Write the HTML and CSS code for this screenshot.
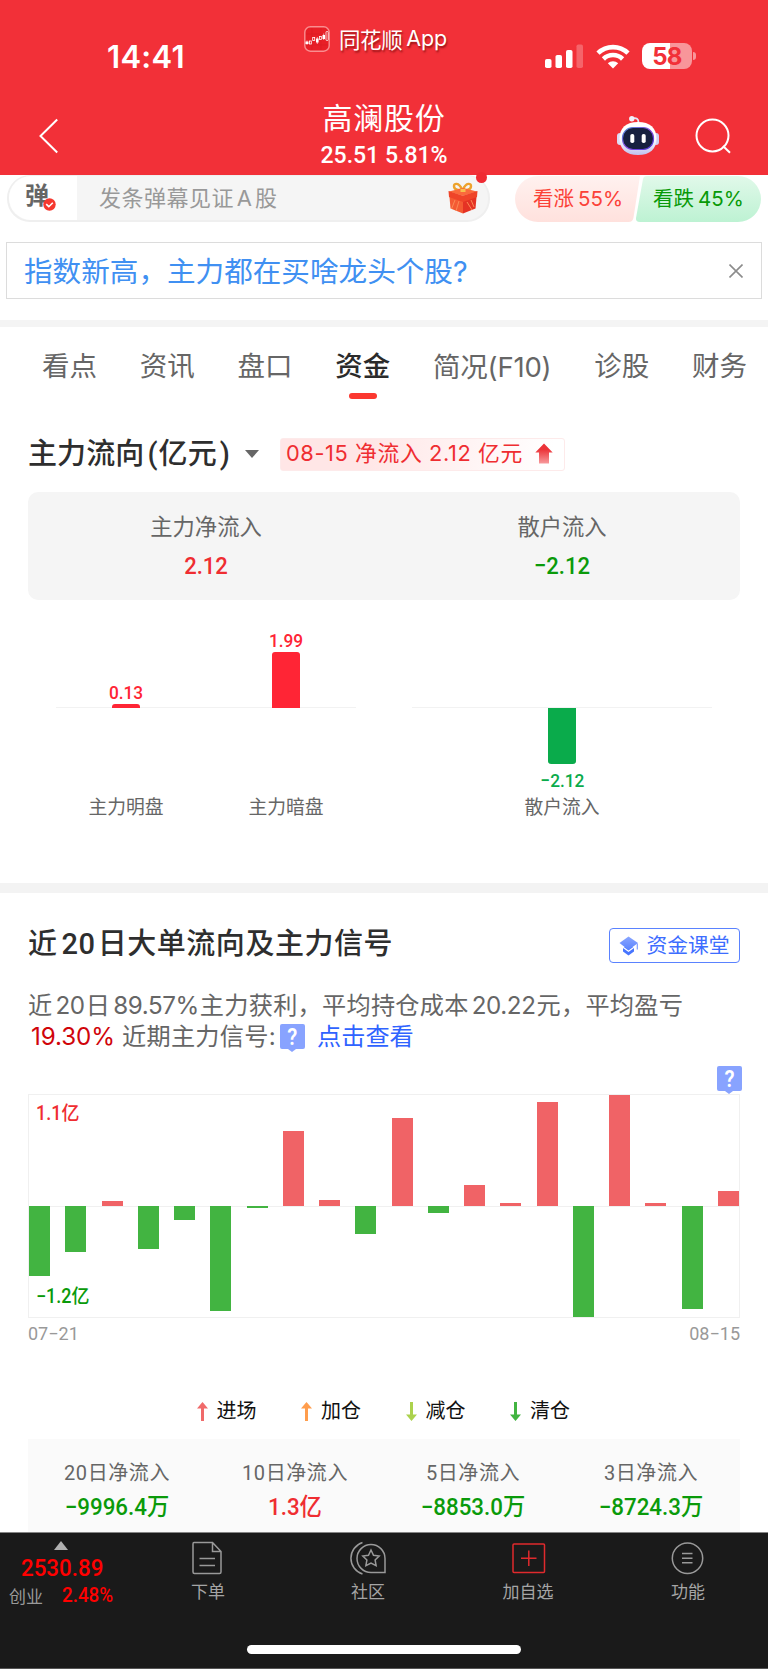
FILE: index.html
```html
<!DOCTYPE html>
<html lang="zh-CN">
  <head>
    <meta charset="utf-8" />
    <title>高澜股份</title>
    <link rel="stylesheet" href="styles.css">
  </head>
  <body>
    <header class="header">
      <div class="status">
        <div class="clock">14:41</div>
        <div class="appname">
          <svg width="26" height="26" viewBox="0 0 26 26">
            <rect x="0.8" y="0.8" width="24.4" height="24.4" rx="5.5" fill="#e81f27" stroke="#f98e90" stroke-width="1.4"/>
            <path d="M2 8h22M2 19h22M8 2v22M17 2v22" stroke="#d81c24" stroke-width="0.6"/>
            <g fill="#fff">
              <rect x="1.5" y="15.5" width="3" height="2.5"/>
              <rect x="12" y="12.5" width="2.6" height="4"/>
              <rect x="18.5" y="9" width="2.5" height="4"/>
              <path d="M3 14.5v4.5M13.3 11v7M19.7 7.5v6.5" stroke="#fff" stroke-width="0.6"/>
            </g>
            <g fill="none" stroke="#fff" stroke-width="0.8">
              <rect x="5.5" y="15" width="1.8" height="3"/>
              <rect x="8.7" y="11.5" width="2" height="3"/>
              <rect x="15.5" y="10.5" width="1.8" height="3"/>
              <rect x="22" y="5.5" width="2.2" height="9" rx="0.8"/>
            </g>
          </svg>
          <span class="appcn">同花顺</span><span class="appen">App</span>
        </div>
        <div class="signals">
          <svg width="38" height="24" viewBox="0 0 38 24" fill="#fff">
            <rect x="0" y="15" width="6.5" height="9" rx="1.8"/>
            <rect x="10.5" y="11" width="6.5" height="13" rx="1.8"/>
            <rect x="21" y="6" width="6.5" height="18" rx="1.8"/>
            <rect x="31.5" y="0.5" width="6.5" height="23.5" rx="1.8" opacity="0.25"/>
          </svg>
          <svg width="34" height="25" viewBox="0 0 34 25">
            <g fill="none" stroke="#fff" stroke-width="4.6">
              <path d="M2 9.2a21.5 21.5 0 0 1 30 0"/>
              <path d="M7.4 15a13.7 13.7 0 0 1 19.2 0"/>
            </g>
            <path d="M17 24.5l-5.2-5.2a7.5 7.5 0 0 1 10.4 0z" fill="#fff"/>
          </svg>
          <div class="battery"><span class="level">58</span><i class="nub"></i></div>
        </div>
      </div>
      <div class="titlebar">
        <svg class="back" width="20" height="36" viewBox="0 0 20 36"><path d="M18.2 1.5L1.5 18l16.7 16.5" fill="none" stroke="#fff" stroke-width="2"/></svg>
        <div class="stock">
          <div class="name">高澜股份</div>
          <div class="quote">25.51 5.81%</div>
        </div>
        <div class="tools">
          <svg width="42" height="40" viewBox="0 0 42 40">
            <defs>
              <linearGradient id="shell" x1="0" y1="0" x2="0" y2="1"><stop offset="0.5" stop-color="#fff"/><stop offset="1" stop-color="#bfc0ee"/></linearGradient>
              <linearGradient id="ring" x1="0" y1="0" x2="1" y2="1"><stop offset="0" stop-color="#4f8fd8"/><stop offset="0.5" stop-color="#8a4be0"/><stop offset="1" stop-color="#4a35d8"/></linearGradient>
            </defs>
            <path d="M15.5 2.5c4-1 6 0.5 6 4" fill="none" stroke="#e6e6f6" stroke-width="1.8"/>
            <circle cx="14.8" cy="2.8" r="2.7" fill="#f1f1fb"/>
            <rect x="0" y="17" width="6" height="12" rx="3" fill="#dcdcf6"/>
            <rect x="36" y="17" width="6" height="12" rx="3" fill="#cfcff2"/>
            <path d="M21 6c12 0 18.5 6 18.5 16.5S33 39 21 39 2.5 33 2.5 22.5 9 6 21 6z" fill="url(#shell)"/>
            <rect x="5.5" y="11.5" width="31" height="22" rx="10.5" fill="#17203f" stroke="url(#ring)" stroke-width="1.2"/>
            <rect x="13.3" y="18" width="4" height="9" rx="1.8" fill="#fff"/>
            <rect x="24.7" y="18" width="4" height="9" rx="1.8" fill="#fff"/>
          </svg>
          <svg width="36" height="36" viewBox="0 0 36 36" fill="none" stroke="#fff" stroke-width="2">
            <circle cx="17.5" cy="17.5" r="16"/>
            <path d="M28 28l7 6.8"/>
          </svg>
        </div>
      </div>
    </header>

    <div class="danmu">
      <div class="inputbar">
        <div class="toggle">
          <span class="dan">弹</span>
          <svg class="check" width="13" height="13" viewBox="0 0 13 13"><circle cx="6.5" cy="6.5" r="6.2" fill="#f5382f"/><path d="M3.2 6.2l2.6 2.5 4-4" fill="none" stroke="#fff" stroke-width="1.6"/></svg>
        </div>
        <div class="hint">发条弹幕见证 A 股</div>
        <svg class="gift" width="30" height="32" viewBox="0 0 30 32">
          <g fill="none" stroke="#eda32c" stroke-width="2.4">
            <path d="M14 7.5C11 0 5.5 1 6 4.5s5 4 8 3z"/>
            <path d="M15 7.5C18 0 23.5 1 23 4.5s-5 4-8 3z"/>
          </g>
          <path d="M1 9.5L15 6l14 3.5-14 4.5z" fill="#fa6a3c"/>
          <path d="M1 9.5l14 4.5v17.5L2.5 26.5z" fill="#f45a33"/>
          <path d="M29 9.5L15 14v17.5l12.5-5z" fill="#e53224"/>
          <path d="M0.5 9l14.5 5 14.5-5-0.5 6-14 5-14-5z" fill="#ef4429"/>
          <path d="M7 18l-3.5 9M11 19l-3 10M19 20l5 8M23 18l3 7" stroke="#fb8a55" stroke-width="1"/>
          <path d="M12.5 7h5v3h-5z" fill="#f6c04c"/>
        </svg>
        <i class="reddot"></i>
      </div>
      <svg class="vote" width="246" height="46" viewBox="0 0 246 46">
        <defs>
          <linearGradient id="up" x1="0" y1="0" x2="0" y2="1"><stop offset="0" stop-color="#fff1ef"/><stop offset="1" stop-color="#ffe1dd"/></linearGradient>
          <linearGradient id="down" x1="0" y1="0" x2="0" y2="1"><stop offset="0" stop-color="#e1f9ea"/><stop offset="1" stop-color="#bdf2d3"/></linearGradient>
        </defs>
        <path d="M23 0H125L118.5 41.5Q117.8 46 113.5 46H23A23 23 0 0 1 23 0z" fill="url(#up)"/>
        <path d="M132 0Q128.5 0 128 3L121 42Q120.5 46 125 46H223A23 23 0 0 0 223 0z" fill="url(#down)"/>
        <text x="18" y="29.5" fill="#fb4238">看涨<tspan x="63">55%</tspan></text>
        <text x="138" y="29.5" fill="#089a08">看跌<tspan x="183">45%</tspan></text>
      </svg>
    </div>

    <div class="banner">
      <span>指数新高，主力都在买啥龙头个股?</span>
      <svg width="14" height="14" viewBox="0 0 14 14"><path d="M0.5 0.5l13 13M13.5 0.5l-13 13" stroke="#8c8c8c" stroke-width="1.6"/></svg>
    </div>

    <nav class="tabs">
      <span>看点</span>
      <span>资讯</span>
      <span>盘口</span>
      <span class="active">资金</span>
      <span class="f10">简况(F10)</span>
      <span>诊股</span>
      <span>财务</span>
    </nav>

    <section class="flow">
      <div class="flowhead">
        <h2>主力流向<span class="paren">(</span>亿元<span class="paren">)</span></h2>
        <i class="caret"></i>
        <div class="badge">
          <span>08-15 净流入 2.12 亿元</span>
          <svg width="18" height="21" viewBox="0 0 18 21">
            <defs><linearGradient id="arr" x1="0" y1="0" x2="0" y2="1"><stop offset="0.3" stop-color="#ec3338"/><stop offset="1" stop-color="#f79a9c"/></linearGradient></defs>
            <path d="M9 0.5l8.7 9H14V20.5H4V9.5H0.3z" fill="url(#arr)"/>
          </svg>
        </div>
      </div>
      <div class="summary">
        <div><p>主力净流入</p><b class="red">2.12</b></div>
        <div><p>散户流入</p><b class="green">−2.12</b></div>
      </div>
      <div class="minicharts">
        <div class="mini">
          <div class="col">
            <div class="upper"><em>0.13</em><i style="height:4px"></i></div>
            <div class="lower"></div>
            <p>主力明盘</p>
          </div>
          <div class="col">
            <div class="upper"><em>1.99</em><i style="height:56px"></i></div>
            <div class="lower"></div>
            <p>主力暗盘</p>
          </div>
        </div>
        <div class="mini">
          <div class="col">
            <div class="upper"></div>
            <div class="lower"><i style="height:56px"></i><em>−2.12</em></div>
            <p>散户流入</p>
          </div>
        </div>
      </div>
    </section>

    <section class="signal">
      <div class="sighead">
        <h2>近<span class="num">20</span>日大单流向及主力信号</h2>
        <div class="classbtn">
          <svg width="20" height="20" viewBox="0 0 20 20">
            <defs><linearGradient id="cap" x1="0" y1="0" x2="0" y2="1"><stop offset="0" stop-color="#8aa6ff"/><stop offset="1" stop-color="#5a84ff"/></linearGradient></defs>
            <path d="M4 11v4.500l5.500 4 5.500-4V11z" fill="#4775ff"/>
            <path d="M9.500 0.500L19 7l-9.500 7L0.500 7z" fill="url(#cap)"/>
            <path d="M4 11.300l5.500 4 5.500-4" fill="none" stroke="#fff" stroke-width="1.300"/>
            <path d="M18.300 7.500v6" fill="none" stroke="#7d9bff" stroke-width="1.200"/>
          </svg>
          <span>资金课堂</span>
        </div>
      </div>
      <div class="desc">
        <div class="line1">近<span class="n">20</span>日<span class="n">89.57%</span>主力获利，平均持仓成本<span class="n">20.22</span>元，平均盈亏</div>
        <div class="line2">
          <span class="pct">19.30%</span>
          <span class="recent">近期主力信号:</span>
          <span class="help"><b>?</b></span>
          <a>点击查看</a>
        </div>
      </div>
      <div class="helprow"><span class="help"><b>?</b></span></div>
      <div class="chart">
        <span class="max">1.1亿</span>
        <span class="min">−1.2亿</span>
        <i class="dn" style="height:70px"></i>
        <i class="dn" style="height:46px"></i>
        <i class="up" style="height:5px"></i>
        <i class="dn" style="height:43px"></i>
        <i class="dn" style="height:14px"></i>
        <i class="dn" style="height:104.5px"></i>
        <i class="dn" style="height:1.5px"></i>
        <i class="up" style="height:75px"></i>
        <i class="up" style="height:6px"></i>
        <i class="dn" style="height:28px"></i>
        <i class="up" style="height:88.5px"></i>
        <i class="dn" style="height:6.5px"></i>
        <i class="up" style="height:21px"></i>
        <i class="up" style="height:3.5px"></i>
        <i class="up" style="height:104px"></i>
        <i class="dn" style="height:111px"></i>
        <i class="up" style="height:111px"></i>
        <i class="up" style="height:3px"></i>
        <i class="dn" style="height:102.5px"></i>
        <i class="up" style="height:15px"></i>
      </div>
      <div class="dates"><span>07−21</span><span>08−15</span></div>
      <div class="legend">
        <div><svg width="11" height="19" viewBox="0 0 11 19"><path d="M5.5 0L11 6.5H7V19H4V6.5H0z" fill="#f06a6a"/></svg><span>进场</span></div>
        <div><svg width="11" height="19" viewBox="0 0 11 19"><path d="M5.5 0L11 6.5H7V19H4V6.5H0z" fill="#ff9d4d"/></svg><span>加仓</span></div>
        <div><svg width="11" height="19" viewBox="0 0 11 19"><path d="M5.5 19L11 12.5H7V0H4V12.5H0z" fill="#acd24d"/></svg><span>减仓</span></div>
        <div><svg width="11" height="19" viewBox="0 0 11 19"><path d="M5.5 19L11 12.5H7V0H4V12.5H0z" fill="#42b441"/></svg><span>清仓</span></div>
      </div>
      <div class="stats">
        <div><p>20日净流入</p><b class="green">−9996.4万</b></div>
        <div><p>10日净流入</p><b class="red">1.3亿</b></div>
        <div><p>5日净流入</p><b class="green">−8853.0万</b></div>
        <div><p>3日净流入</p><b class="green">−8724.3万</b></div>
      </div>
    </section>

    <footer class="bottom">
      <div class="navrow">
        <div class="index">
          <i class="tri"></i>
          <div class="point">2530.89</div>
          <div class="market"><span>创业</span><b>2.48%</b></div>
        </div>
        <div class="item">
          <svg width="36" height="34" viewBox="0 0 36 34" fill="none" stroke="#999" stroke-width="1.5">
            <path d="M4 1.500h18.500l8.500 9v20.500q0 1.500-1.500 1.500H4.500q-1.500 0-1.500-1.500V3q0-1.500 1-1.500zM22.500 1.500V10.500H31M9.500 17.500h15.500M9.500 24.500h15.500"/>
          </svg>
          <span>下单</span>
        </div>
        <div class="item">
          <svg width="36" height="34" viewBox="0 0 36 34" fill="none" stroke="#999" stroke-width="1.5">
            <path d="M12.500 1.500A16.500 16.500 0 0 0 12.500 33M21 31.500A14 14 0 1 1 35 17.500V31.500z"/>
            <path d="M21 9l2.500 5.200 5.700.8-4.100 4 1 5.700-5.100-2.700-5.100 2.700 1-5.700-4.100-4 5.700-.8z"/>
          </svg>
          <span>社区</span>
        </div>
        <div class="item">
          <svg width="36" height="34" viewBox="0 0 36 34" fill="none" stroke="#e02a2d" stroke-width="1.5">
            <rect x="3" y="3" width="31.5" height="28.5" rx="1"/>
            <path d="M18.8 9.5v15.5M11 17.3h15.5"/>
          </svg>
          <span>加自选</span>
        </div>
        <div class="item">
          <svg width="36" height="34" viewBox="0 0 36 34" fill="none" stroke="#999" stroke-width="1.5">
            <circle cx="17.500" cy="17.3" r="15.2"/>
            <path d="M12 12.5h10.500M12 17.3h10.500M12 21.8h10.500"/>
          </svg>
          <span>功能</span>
        </div>
      </div>
      <div class="home"></div>
    </footer>
  </body>
</html>
```
FILE: styles.css
```css
* {
  box-sizing: border-box;
}
body {
  margin: 0;
  width: 768px;
  height: 1669px;
  overflow: hidden;
  background: #fff;
  color: #666;
  font-family: Roboto, "Noto Sans CJK SC", sans-serif;
  display: flex;
  flex-direction: column;
}
h2, p {
  margin: 0;
}
i, em {
  font-style: normal;
  display: block;
}
svg {
  display: block;
  flex: none;
}
span, b, p, em, h2, a {
  white-space: nowrap;
}
.red {
  color: #ef2d31;
}
.green {
  color: #0a9a0a;
}

/* header */
.header {
  height: 175px;
  flex: none;
  background: #f23038;
  color: #fff;
}
.status {
  height: 88px;
  display: grid;
  grid-template-columns: 304px 241px 1fr;
  align-items: start;
}
.clock {
  padding: 37px 0 0 107px;
  font: 600 31px/39px Inter, sans-serif;
  letter-spacing: 0.3px;
}
.appname {
  display: flex;
  align-items: center;
  height: 26px;
  margin-top: 26px;
  font-size: 21.5px;
  text-shadow: 1px 2px 2px rgba(90, 0, 0, 0.6);
}
.appname span {
  margin-top: -2px;
}
.appcn {
  margin-left: 9px;
  letter-spacing: -0.4px;
}
.appen {
  margin-left: 4px;
  font-family: Inter, sans-serif;
  letter-spacing: -0.1px;
}
.signals {
  display: flex;
  gap: 13px;
  align-items: center;
  margin-top: 43px;
  height: 26px;
}
.battery {
  position: relative;
  width: 50px;
  height: 26px;
  margin-left: -1px;
  border-radius: 8px;
  background: linear-gradient(90deg, #fff 57%, #f8969a 57%);
  text-align: center;
  font: 700 24px/27px Inter, sans-serif;
  letter-spacing: -0.8px;
  color: #f23038;
}
.nub {
  position: absolute;
  left: 51px;
  top: 9px;
  width: 3px;
  height: 8px;
  border-radius: 0 3px 3px 0;
  background: #f8969a;
}
.titlebar {
  height: 87px;
  display: grid;
  grid-template-columns: 39px 1fr 113px;
  position: relative;
}
.back {
  grid-column: 2;
  margin-top: 30px;
}
.stock {
  position: absolute;
  left: 0;
  right: 0;
  top: 11px;
  text-align: center;
}
.name {
  font-size: 30px;
  line-height: 40px;
  letter-spacing: 0.8px;
}
.quote {
  margin-top: 1px;
  font-size: 24.5px;
  font-weight: 500;
  line-height: 30px;
  transform: scaleX(0.94);
}
.tools {
  grid-column: 3;
  display: flex;
  gap: 36px;
  margin: 27px 0 0 -38px;
  align-items: center;
  height: 42px;
}

/* danmu bar */
.danmu {
  height: 47px;
  flex: none;
  display: flex;
  gap: 25px;
  padding-left: 7px;
}
.inputbar {
  position: relative;
  width: 483px;
  height: 47px;
  display: flex;
  align-items: center;
  background: #f5f5f5;
  border: 2px solid #efefef;
  border-top-width: 1px;
  border-radius: 23px;
}
.toggle {
  width: 68px;
  height: 44px;
  border-radius: 22px 0 0 22px;
  background: #fff;
  position: relative;
}
.dan {
  position: absolute;
  left: 16px;
  top: 3px;
  font-size: 24px;
  line-height: 34px;
  font-weight: 700;
}
.check {
  position: absolute;
  left: 34px;
  top: 22px;
}
.hint {
  margin-left: 22px;
  font: 22px/30px Inter, "Noto Sans CJK SC", sans-serif;
  letter-spacing: 0.5px;
  word-spacing: -4px;
  color: #999;
  white-space: nowrap;
}
.gift {
  position: absolute;
  right: 10px;
  top: 6px;
}
.reddot {
  position: absolute;
  right: 1px;
  top: -4px;
  width: 11px;
  height: 11px;
  border-radius: 50%;
  background: #ef2b33;
}
.vote {
  margin-top: 1px;
  font: 20.5px Inter, "Noto Sans CJK SC", sans-serif;
}

/* ad banner */
.banner {
  height: 57px;
  flex: none;
  margin: 20px 6px 21px;
  padding: 2px 18px 0 17px;
  border: 1px solid #dcdcdc;
  display: flex;
  align-items: center;
  justify-content: space-between;
  color: #4090f2;
  font: 28.6px/40px Inter, "Noto Sans CJK SC", sans-serif;
}
.banner svg {
  margin-top: -1px;
}

/* tabs */
.tabs {
  height: 90px;
  flex: none;
  border-top: 7px solid #f4f4f4;
  padding: 13px 21px 0 42px;
  display: flex;
  justify-content: space-between;
  font-size: 27.5px;
  line-height: 54px;
}
.tabs .active {
  color: #2b2b2b;
  font-weight: 500;
}
.active::after {
  content: "";
  display: block;
  width: 28px;
  height: 6px;
  margin: -1px auto 0;
  border-radius: 3px;
  background: #fb3830;
}
.f10 {
  font-family: Inter, "Noto Sans CJK SC", sans-serif;
  letter-spacing: -0.2px;
}

/* fund flow */
.flow {
  height: 483px;
  flex: none;
  padding: 27px 28px 0;
  border-bottom: 10px solid #f3f3f3;
}
h2 {
  color: #2e2e2e;
  font-size: 29px;
  font-weight: 500;
  line-height: 34px;
}
.paren {
  margin: 0 1px 0 3px;
}
.flowhead {
  display: flex;
  align-items: center;
  height: 34px;
}
.flowhead h2 {
  letter-spacing: 0.1px;
}
.caret {
  margin: -1px 21px 0 14px;
  border: 7px solid transparent;
  border-top: 8px solid #666;
  border-bottom: 0;
}
.badge {
  width: 285px;
  height: 33px;
  display: flex;
  align-items: center;
  gap: 12px;
  padding: 0 0 2px 5px;
  border: 1px solid #fdeaea;
  border-radius: 3px;
  background: linear-gradient(100deg, #ffe6e6 30%, #fff 95%);
  color: #ef2d31;
  font: 21.8px/30px Inter, "Noto Sans CJK SC", sans-serif;
  letter-spacing: 0.6px;
}
.summary {
  height: 108px;
  margin-top: 21px;
  border-radius: 10px;
  background: #f5f5f5;
  display: grid;
  grid-template-columns: 1fr 1fr;
  text-align: center;
}
.summary p {
  margin-top: 19px;
  font-size: 22.3px;
  line-height: 32px;
}
.summary b {
  display: block;
  font-size: 24.5px;
  line-height: 30px;
  font-weight: 500;
  margin-top: 8px;
  transform: scaleX(0.9);
}
.minicharts {
  display: flex;
  justify-content: space-between;
  padding: 0 28px;
}
.mini {
  width: 300px;
  height: 222px;
  display: flex;
  justify-content: center;
  gap: 40px;
  background: linear-gradient(#f2f2f2, #f2f2f2) 0 107px / 100% 1px no-repeat;
}
.col {
  width: 120px;
  display: flex;
  flex-direction: column;
  align-items: center;
}
.mini .upper {
  height: 108px;
  display: flex;
  flex-direction: column;
  justify-content: flex-end;
  align-items: center;
  color: #ff2535;
}
.mini .lower {
  height: 87px;
  display: flex;
  flex-direction: column;
  align-items: center;
  color: #0aab4b;
}
.mini i {
  width: 28px;
}
.upper i {
  border-radius: 3px 3px 0 0;
  background: #ff2535;
}
.lower i {
  border-radius: 0 0 3px 3px;
  background: #0aab4b;
}
.mini em {
  font-size: 19.2px;
  font-weight: 500;
  line-height: 23px;
  transform: scaleX(0.9);
}
.lower em {
  margin-top: 5px;
}
.col p {
  font-size: 18.8px;
  line-height: 27px;
}

/* signal section */
.signal {
  height: 639px;
  flex: none;
  padding: 35px 28px 0;
}
.sighead {
  height: 35px;
  display: flex;
  align-items: center;
  justify-content: space-between;
}
.sighead h2 {
  margin-top: -4px;
  letter-spacing: 0.55px;
}
.num {
  margin: 0 2px 0 4px;
}
.classbtn {
  width: 131px;
  height: 35px;
  border: 1.5px solid #5a82ff;
  border-radius: 4px;
  display: flex;
  align-items: center;
  justify-content: center;
  gap: 7px;
  color: #3d6dff;
  font-size: 20.8px;
  line-height: 30px;
}
.desc {
  margin-top: 27px;
  font: 24.2px/31px Inter, "Noto Sans CJK SC", sans-serif;
  letter-spacing: 0.25px;
  white-space: nowrap;
}
.desc .n {
  margin: 0 1px 0 3px;
  letter-spacing: -0.4px;
}
.line2 {
  display: flex;
  align-items: center;
}
.pct {
  margin-left: 3px;
  width: 91px;
  letter-spacing: -0.1px;
  color: #d0040a;
}
.recent {
  width: 158px;
}
.line2 a {
  margin-left: 12px;
  color: #2f63ff;
  letter-spacing: 0;
}
.help {
  position: relative;
  display: block;
  width: 25px;
  height: 25px;
  border-radius: 2px;
  background: #88a3ff;
  color: #fff;
  font: 24px/26px Roboto, sans-serif;
  text-align: center;
}
.help b {
  display: block;
  font-weight: 600;
  transform: scaleX(0.85);
}
.help::after {
  content: "";
  position: absolute;
  left: 8px;
  top: 25px;
  border: 4px solid transparent;
  border-top: 3px solid #88a3ff;
  border-bottom: 0;
}
.helprow {
  display: flex;
  justify-content: flex-end;
  margin: 14px -2px 0 0;
  height: 28px;
}
.chart {
  position: relative;
  height: 224px;
  border: 1px solid #f0f0f0;
  background: linear-gradient(#f0f0f0, #f0f0f0) 0 111px / 100% 1px no-repeat;
  display: flex;
  justify-content: space-between;
}
.chart i {
  width: 21px;
}
.up {
  align-self: flex-start;
  background: #f06366;
  margin-top: auto;
  margin-bottom: 111px;
}
.dn {
  background: #42b441;
  margin-top: 111px;
}
.max, .min {
  position: absolute;
  left: 7px;
  font-size: 19.5px;
  font-weight: 500;
  line-height: 24px;
  transform: scaleX(0.92);
  transform-origin: left;
}
.max {
  top: 7px;
  color: #ef2d31;
}
.min {
  bottom: 8px;
  color: #0a9a0a;
}
.dates {
  display: flex;
  justify-content: space-between;
  margin-top: 4px;
  font-size: 18px;
  line-height: 24px;
  color: #999;
}
.legend {
  display: flex;
  justify-content: center;
  gap: 43px;
  margin-top: 50px;
  color: #111;
  font-size: 20px;
  line-height: 30px;
}
.legend div {
  width: 61.5px;
  display: flex;
  align-items: center;
  gap: 9px;
}
.stats {
  margin-top: 13px;
  height: 93px;
  padding-top: 19px;
  background: #fafafa;
  display: grid;
  grid-template-columns: repeat(4, 1fr);
  text-align: center;
}
.stats p {
  font-size: 20px;
  letter-spacing: 0.6px;
  line-height: 30px;
}
.stats b {
  display: block;
  margin-top: 4px;
  font-size: 23.5px;
  line-height: 30px;
  font-weight: 500;
  transform: scaleX(0.95);
}

/* bottom nav */
.bottom {
  height: 137px;
  flex: none;
  background: #1a1a1a;
  border-top: 1px solid #858585;
  border-bottom: 1px solid #555;
}
.navrow {
  display: grid;
  grid-template-columns: 128px repeat(4, 160px);
  height: 112px;
}
.index {
  padding: 8px 0 0 9px;
}
.tri {
  width: 0;
  margin-left: 45px;
  border: 7.5px solid transparent;
  border-bottom: 9px solid #b0b0b0;
  border-top: 0;
}
.point {
  margin: 3px 0 0 12px;
  font-size: 24px;
  line-height: 30px;
  font-weight: 500;
  transform: scaleX(0.93);
  transform-origin: left;
  color: #f00;
}
.market {
  display: flex;
  align-items: center;
  height: 24px;
  font-size: 17px;
  color: #999;
}
.market b {
  margin-left: 19px;
  font-size: 20px;
  font-weight: 500;
  transform: scaleX(0.94);
  transform-origin: left;
  color: #f00;
}
.item {
  display: flex;
  flex-direction: column;
  align-items: center;
  padding-top: 8px;
  font-size: 17px;
  line-height: 26px;
  color: #a5a5a5;
}
.item span {
  margin-top: 4px;
}
.home {
  width: 274px;
  height: 9px;
  margin: 0 auto;
  border-radius: 5px;
  background: #fff;
}
```
